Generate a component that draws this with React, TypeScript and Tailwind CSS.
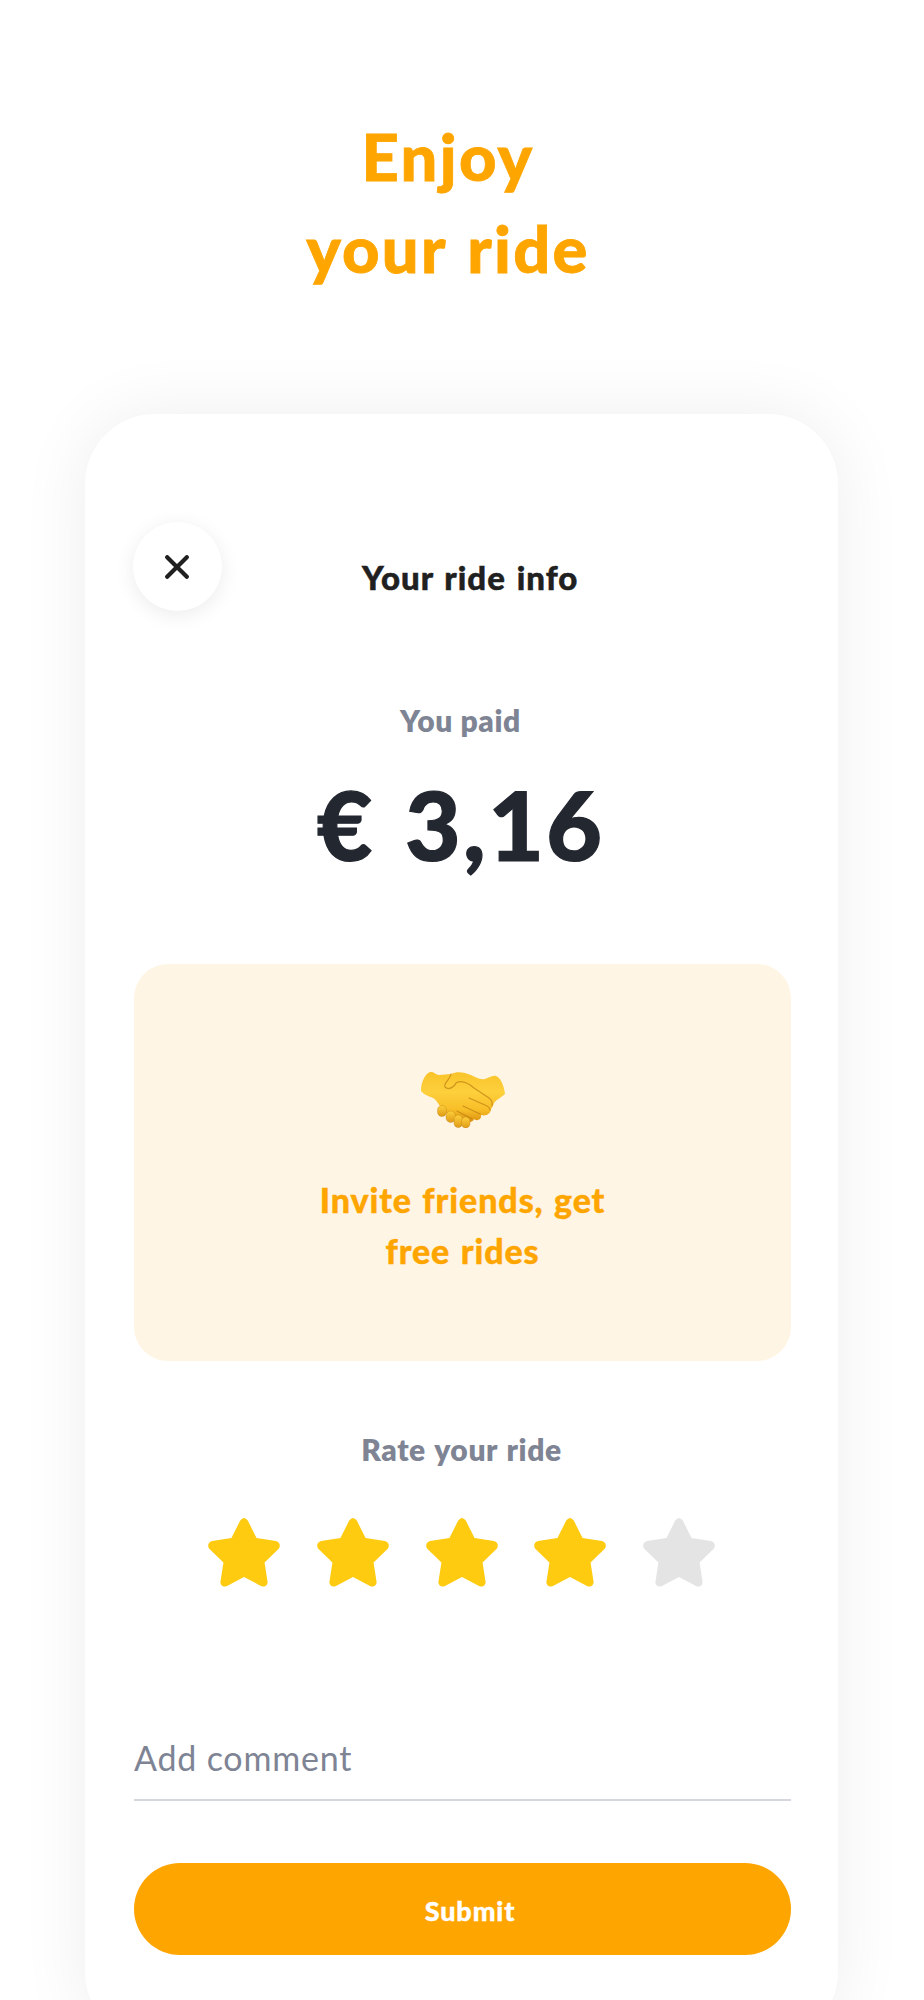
import React, {useState} from "react";

const STAR_COUNT = 5;

const StarIcon: React.FC<{filled: boolean}> = ({filled}) => (
	<svg
		viewBox="0 0 70 69"
		preserveAspectRatio="none"
		className={`h-[69px] w-[72px] ${filled ? "text-[#fecb11]" : "text-[#e4e4e4]"}`}
		fill="currentColor">
		<path d="M31.3 2.6 Q35 -2.4 38.7 2.6 L47.2 20 L66 23 Q71.6 25.2 69 30.5 L55 44.5 L58 64.5 Q56.8 70.2 51.5 68 L35 59 L18.5 68 Q13.2 70.2 12 64.5 L15 44.5 L1 30.5 Q-1.6 25.2 4 23 L22.8 20 Z" />
	</svg>
);

const HandshakeIcon: React.FC = () => (
	<svg viewBox="0 0 84 56" className="h-14 w-[84px]">
		<defs>
			<linearGradient id="skin" x1="0" y1="0" x2="0" y2="1">
				<stop offset="0" stopColor="#f9c32a" />
				<stop offset="0.4" stopColor="#fdd03c" />
				<stop offset="0.75" stopColor="#f8be28" />
				<stop offset="1" stopColor="#d9900f" />
			</linearGradient>
			<linearGradient id="finger" x1="0" y1="0" x2="0" y2="1">
				<stop offset="0" stopColor="#fdd03c" />
				<stop offset="1" stopColor="#e09b17" />
			</linearGradient>
		</defs>
		<path
			d="M0 19 C0 10 4 2 9 0 C13 -1 14 3 18 3 L30 2 C36 -1 43 0 50 3 C56 6 60 8 64 7 C68 6 71 3 75 4 C79 5 83 13 84 22 C81 25 76 27 73 31 C72 34 71 36 70 37 C70 41 66 43 65 43 C63 44 60 43 60 43 C61 49 54 49 53 47 C52 51 45 51 42 49 L24 40 C20 37 16 28 12 26 C8 24 3 23 0 19 Z"
			fill="url(#skin)"
		/>
		<g fill="url(#finger)" stroke="#b9780f" strokeOpacity="0.45" strokeWidth="0.8">
			<rect x="16.5" y="33.5" width="9" height="11" rx="4.5" />
			<rect x="25" y="39" width="9.5" height="11.5" rx="4.7" />
			<rect x="33" y="43" width="8.5" height="12.5" rx="4.2" />
			<rect x="40.5" y="45" width="8.5" height="11" rx="4.2" />
		</g>
		<g
			fill="none"
			stroke="#b9780f"
			strokeOpacity="0.65"
			strokeWidth="1.2"
			strokeLinecap="round">
			<path d="M30 2 C29 8 22 11 24 15 C28 19 34 14 35 11 C40 8 46 10 53 16 L68 26 Q72 29 71 34" />
			<path d="M48 26 L64 33 Q69 35 69 38" />
			<path d="M42 34 L59 42" />
			<path d="M36 39 L51 47" />
		</g>
	</svg>
);

export default function App() {
	const [rating, setRating] = useState(4);
	const [comment, setComment] = useState("");

	return (
		<div className="flex h-[2000px] w-[924px] flex-col overflow-hidden bg-white pt-[110px] font-['Lato',sans-serif]">
			<h1 className="mr-[28px] text-center text-[65px] leading-[92px] font-black tracking-[2.3px] text-[#ffa500] [word-spacing:3px] [-webkit-text-stroke:0.8px_#ffa500]">
				Enjoy
				<br />
				your ride
			</h1>

			<main className="mt-[120px] ml-[85px] flex h-[1628px] w-[753px] shrink-0 flex-col rounded-[70px] bg-white pt-[108px] pr-[47px] pl-[49px] shadow-[0_0_70px_rgba(0,0,0,0.07)]">
				{/* Header */}
				<header className="flex h-[89px] items-center">
					<button
						type="button"
						aria-label="Close"
						className="-ml-px flex size-[89px] shrink-0 items-center justify-center rounded-full bg-white shadow-[0_4px_20px_rgba(0,0,0,0.08)]">
						<svg viewBox="0 0 24 24" className="mr-px size-6 text-[#202020]">
							<path
								d="M2.2 2.2 21.8 21.8M21.8 2.2 2.2 21.8"
								stroke="currentColor"
								strokeWidth="4.2"
								strokeLinecap="round"
							/>
						</svg>
					</button>
					<h2 className="mt-[22px] ml-[140px] text-[33px] font-black tracking-[1px] whitespace-nowrap text-[#202020] [word-spacing:2px] [-webkit-text-stroke:0.5px_#202020]">
						Your ride info
					</h2>
				</header>

				{/* Price */}
				<section className="mt-[89px] pr-1 text-center">
					<p className="text-[30px] leading-10 font-extrabold tracking-[0.6px] text-[#7e8494]">
						You paid
					</p>
					<p className="mt-[32px] text-[96px] leading-[104px] font-black tracking-[2.4px] text-[#232730] [word-spacing:5px] [-webkit-text-stroke:1.2px_#232730]">
						€ 3,16
					</p>
				</section>

				{/* Invite banner */}
				<section className="mt-[88px] flex h-[397px] shrink-0 flex-col items-center rounded-[34px] bg-[#fff5e5] pt-[108px]">
					<HandshakeIcon />
					<p className="mt-[47px] text-center text-[34px] leading-[50.5px] font-black tracking-[0.9px] text-[#ffa500] [word-spacing:1.5px] [-webkit-text-stroke:0.4px_#ffa500]">
						Invite friends, get
						<br />
						free rides
					</p>
				</section>

				{/* Rating */}
				<section className="mt-[68px] flex flex-col items-center pr-0.5">
					<p className="text-[30px] leading-10 font-extrabold tracking-[0.6px] text-[#7e8494] [word-spacing:1.5px]">
						Rate your ride
					</p>
					<div className="mt-[49px] flex gap-[36.8px]">
						{Array.from({length: STAR_COUNT}, (_, i) => (
							<button
								key={i}
								type="button"
								aria-label={`${i + 1} stars`}
								onClick={() => setRating(i + 1)}>
								<StarIcon filled={i < rating} />
							</button>
						))}
					</div>
				</section>

				<input
					type="text"
					value={comment}
					onChange={(e) => setComment(e.target.value)}
					placeholder="Add comment"
					className="mt-[138px] h-[76px] shrink-0 border-b-2 border-[#d5d7e0] pb-[10px] text-[34px] tracking-[0.8px] text-[#7e8494] outline-none placeholder:text-[#7e8494]"
				/>

				<button
					type="button"
					className="mt-[62px] h-[92px] shrink-0 rounded-full bg-[#ffa500] pt-1 pl-[15px] text-[27px] font-black tracking-[0.9px] text-white [-webkit-text-stroke:0.4px_#fff]">
					Submit
				</button>
			</main>
		</div>
	);
}
